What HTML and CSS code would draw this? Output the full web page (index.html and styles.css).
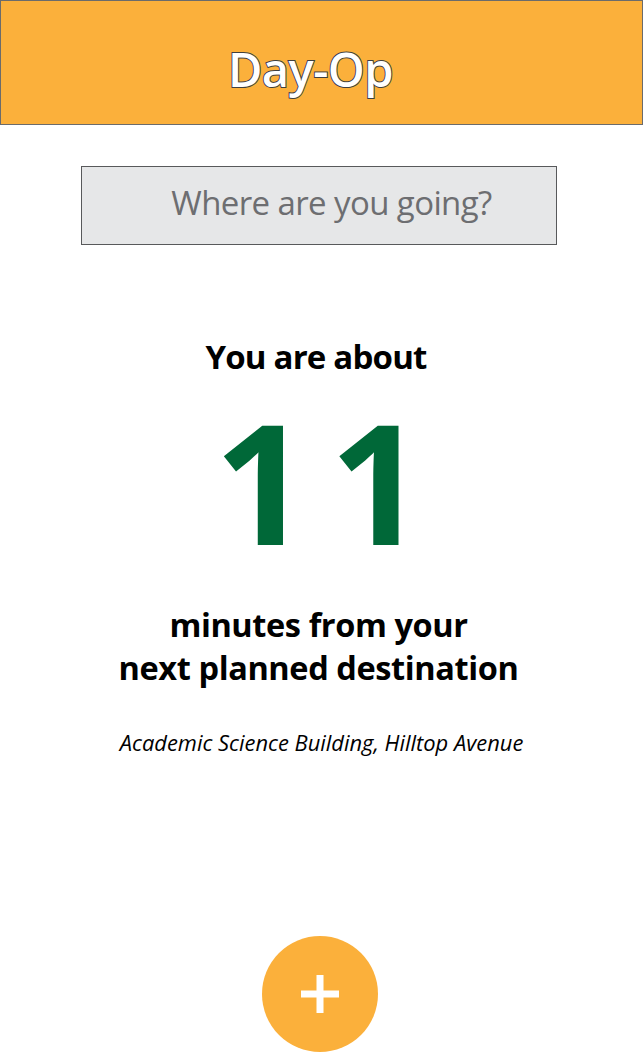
FILE: index.html
```html
<!DOCTYPE html>
<html>
<head>
<meta charset="utf-8">
<link rel="stylesheet" href="styles.css">
</head>
<body>
<div class="app">
  <header class="header"><h1 class="title">Day-Op</h1></header>
  <div class="search"><span class="search-text">Where are you going?</span></div>
  <section class="eta">
    <p class="lead">You are about</p>
    <p class="minutes">11</p>
    <p class="desc">minutes from your<br>next planned destination</p>
    <p class="place">Academic Science Building, Hilltop Avenue</p>
  </section>
  <div class="fab-row">
    <button class="fab" aria-label="Add">
      <svg width="38" height="38" viewBox="0 0 38 38"><rect x="0" y="15.5" width="38" height="7" fill="#fff"/><rect x="15.5" y="0" width="7" height="38" fill="#fff"/></svg>
    </button>
  </div>
</div>
</body>
</html>
```
FILE: styles.css
```css
html, body { margin: 0; padding: 0; background: #fff; }
body { font-family: "Open Sans", "DejaVu Sans", sans-serif; }
.app { width: 643px; height: 1052px; display: flex; flex-direction: column; align-items: center; overflow: hidden; }
.header {
  box-sizing: border-box; width: 643px; height: 125px;
  background: #FBB03B; border: 1px solid #6b6b6b;
  display: flex; align-items: center; justify-content: center;
}
.title {
  margin: 0; padding-top: 12px; margin-left: -22px;
  font-size: 47px; font-weight: 600; color: #fff; letter-spacing: -0.5px;
  -webkit-text-stroke: 2px #3f3f3f;
  paint-order: stroke fill;
}
.search {
  box-sizing: border-box; width: 476px; height: 79px; margin-top: 41px; margin-left: -6px;
  background: #E6E7E8; border: 1px solid #58595B;
  display: flex; align-items: center; justify-content: center; padding-left: 26px; padding-bottom: 6px;
}
.search-text { font-size: 33px; color: #6D6E71; letter-spacing: -0.6px; }
.eta { display: flex; flex-direction: column; align-items: center; text-align: center; }
.eta p { margin: 0; }
.lead { margin-top: 90px !important; font-size: 33px; font-weight: 700; color: #000; letter-spacing: -0.8px; line-height: 44px; margin-left: -11px !important; }
.minutes { font-size: 167px; font-weight: 700; color: #006838; line-height: 190px; margin-top: 7px !important; letter-spacing: 20px; padding-left: 16px; }
.desc { margin-top: 27px !important; margin-left: -6px !important; font-size: 32.5px; font-weight: 700; color: #000; line-height: 43px; letter-spacing: -0.4px; }
.place { margin-top: 39px !important; font-size: 21.9px; font-style: italic; color: #000; letter-spacing: 0; }
.fab-row { margin-top: auto; display: flex; justify-content: center; }
.fab {
  width: 116px; height: 116px; border-radius: 50%; border: 0; padding: 0; margin: 0 0 0 -4px;
  background: #FBB03B; display: flex; align-items: center; justify-content: center;
}
```
